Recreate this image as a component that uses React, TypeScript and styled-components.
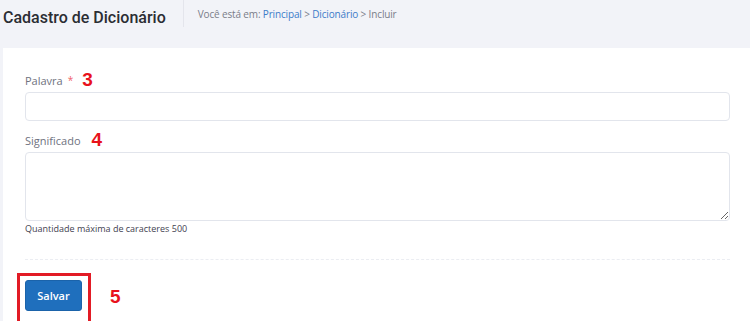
import React from "react";
import styled, { createGlobalStyle } from "styled-components";

const Global = createGlobalStyle`
  html, body { margin: 0; padding: 0; background: #f2f3f8; }
  body { font-family: "Open Sans", "Liberation Sans", sans-serif; }
  * { box-sizing: border-box; }
`;

const Page = styled.div`
  width: 750px;
  height: 321px;
  overflow: hidden;
  background: #f2f3f8;
`;

const Header = styled.div`
  display: flex;
  align-items: flex-start;
  height: 48px;
  padding-left: 3px;
`;

const Title = styled.h1`
  margin: 0;
  padding-top: 5px;
  font-family: Roboto, "Liberation Sans", sans-serif;
  font-weight: 500;
  font-size: 16px;
  line-height: 26px;
  color: #2b2d33;
`;

const Separator = styled.div`
  width: 1px;
  height: 27px;
  background: #e4e5ec;
  margin-left: 17px;
  margin-right: 14px;
`;

const Crumbs = styled.div`
  padding-top: 6px;
  font-size: 10px;
  letter-spacing: -0.15px;
  line-height: 16px;
  color: #7a7d88;
`;

const Crumb = styled.span`
  color: #3d7cc9;
`;

const Card = styled.div`
  margin-left: 3px;
  background: #ffffff;
  height: 273px;
  padding: 22px 20px 0 22px;
  display: flex;
  flex-direction: column;
`;

const Label = styled.div`
  display: flex;
  align-items: center;
  height: 20px;
  font-size: 11px;
  color: #6f7280;
`;

const Star = styled.span`
  color: #f0616a;
  margin-left: 5px;
  font-size: 10px;
`;

const Marker = styled.span<{ $gap: number }>`
  margin-left: ${(p) => p.$gap}px;
  color: #e8121c;
  font-family: "Liberation Sans", Arial, sans-serif;
  font-weight: 700;
  font-size: 19px;
  line-height: 20px;
`;

const Input = styled.input`
  display: block;
  width: 705px;
  height: 33px;
  margin-top: 2px;
  border: 1px solid #e2e5ec;
  border-radius: 4px;
  outline: none;
  background: #fff;
`;

const TextArea = styled.textarea`
  display: block;
  width: 705px;
  height: 69px;
  margin-top: 2px;
  border: 1px solid #e2e5ec;
  border-radius: 4px;
  outline: none;
  resize: vertical;
  background: #fff;
`;

const Group = styled.div<{ $top: number }>`
  margin-top: ${(p) => p.$top}px;
`;

const Hint = styled.div`
  margin-top: 2px;
  font-size: 9px;
  line-height: 12px;
  color: #3f4250;
`;

const Dotted = styled.div`
  margin-top: 24px;
  width: 705px;
  border-top: 1px dashed #ebedf2;
`;

const Footer = styled.div`
  display: flex;
  align-items: center;
  margin-top: 13px;
  margin-left: -8px;
`;

const Highlight = styled.div`
  border: 3px solid #e21b25;
  border-bottom: none;
  padding: 4px 6px 10px 5px;
`;

const Button = styled.button`
  width: 57px;
  height: 31px;
  background: #1f6fbd;
  color: #fff;
  border: 1px solid #1b63aa;
  border-radius: 3px;
  font-family: "Open Sans", sans-serif;
  font-size: 11px;
  font-weight: 600;
  padding: 0;
`;

export default function App() {
  return (
    <Page>
      <Global />
      <Header>
        <Title>Cadastro de Dicionário</Title>
        <Separator />
        <Crumbs>
          Você está em: <Crumb>Principal</Crumb> &gt; <Crumb>Dicionário</Crumb> &gt; Incluir
        </Crumbs>
      </Header>
      <Card>
        <Label>
          Palavra<Star>*</Star>
          <Marker $gap={9}>3</Marker>
        </Label>
        <Input />
        <Group $top={9}>
          <Label>
            Significado<Marker $gap={11}>4</Marker>
          </Label>
          <TextArea />
          <Hint>Quantidade máxima de caracteres 500</Hint>
        </Group>
        <Dotted />
        <Footer>
          <Highlight>
            <Button>Salvar</Button>
          </Highlight>
          <Marker $gap={19}>5</Marker>
        </Footer>
      </Card>
    </Page>
  );
}
